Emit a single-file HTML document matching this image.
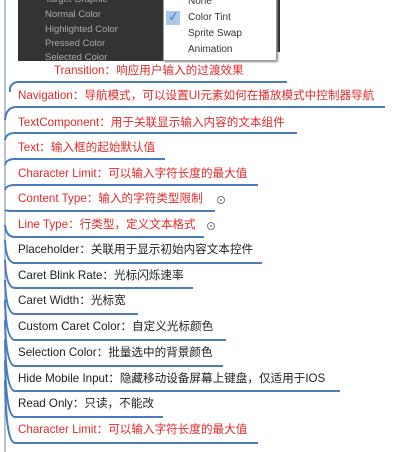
<!DOCTYPE html>
<html><head><meta charset="utf-8"><style>
body{margin:0;width:404px;height:452px;background:#fff;position:relative;overflow:hidden;font-family:"Liberation Sans","Noto Sans CJK SC",sans-serif;}
.t{position:absolute;left:18px;font-size:11.6px;line-height:16px;white-space:nowrap;color:#222;}
.r{color:#e02a2a;}
.panel{position:absolute;left:18px;top:0;width:146px;height:61px;background:#333;}
.panel div{position:absolute;left:27px;font-size:9.5px;color:#aaa;}
.dd{position:absolute;left:163px;top:-2px;width:112px;height:61px;background:#fff;border:1px solid #999;box-shadow:1px 1px 2px #888;}
.dd div{position:absolute;left:24px;font-size:10px;color:#333;}
.plus{position:absolute;width:6px;height:6px;border:1px solid #777;border-radius:50%;font-size:0;}
.plus::after{content:"";position:absolute;left:2px;top:2px;width:2px;height:2px;background:#777;border-radius:50%;}
</style></head><body>
<div class="panel">
<div style="top:-6px">Target Graphic</div>
<div style="top:9px">Normal Color</div>
<div style="top:24px">Highlighted Color</div>
<div style="top:38px">Pressed Color</div>
<div style="top:52px">Selected Color</div>
</div>
<div style="position:absolute;left:276px;top:0;width:4px;height:52px;background:#222"></div>
<div class="dd">
<div style="top:-3px">None</div>
<div style="left:2px;top:12px;width:14px;height:14px;background:#a9c9ef;color:#2a5ea8;text-align:center;line-height:14px;font-size:10px">✓</div>
<div style="top:13px">Color Tint</div>
<div style="top:29px">Sprite Swap</div>
<div style="top:45px">Animation</div>
</div>
<svg width="404" height="452" style="position:absolute;left:0;top:0" fill="none">
<path d="M5 0 V452" stroke="#8a9bb0" stroke-width="1.2"/>
<g stroke="#4a7bbf" stroke-width="2">
<path d="M10 92 Q9 83 18 82 H287"/>
<path d="M5 120 Q6 108 15 107 H385"/>
<path d="M5 140 Q6 133 15 133 H297"/>
<path d="M5 165 Q6 159 15 159 H165"/>
<path d="M5 190 Q6 185 15 185 H258"/>
<path d="M5 210 Q6 211 15 211 H215"/>
<path d="M5 225 Q6 237 15 237 H204"/>
<path d="M5 240 Q6 263 15 263 H262"/>
<path d="M5 260 Q6 288 15 288 H193"/>
<path d="M5 280 Q6 314 15 314 H138"/>
<path d="M5 300 Q6 340 15 340 H226"/>
<path d="M5 320 Q6 366 15 366 H223"/>
<path d="M5 340 Q6 391 15 391 H340"/>
<path d="M5 360 Q6 417 15 417 H163"/>
<path d="M5 380 Q6 443 15 443 H258"/>
</g>
</svg>
<div class="t r" style="left:54px;top:63px">Transition：响应用户输入的过渡效果</div>
<div class="t r" style="top:88px">Navigation：导航模式，可以设置UI元素如何在播放模式中控制器导航</div>
<div class="t r" style="top:115px">TextComponent：用于关联显示输入内容的文本组件</div>
<div class="t r" style="top:140px">Text：输入框的起始默认值</div>
<div class="t r" style="top:166px">Character Limit：可以输入字符长度的最大值</div>
<div class="t r" style="top:191px">Content Type：输入的字符类型限制</div>
<div class="plus" style="left:217px;top:196px"></div>
<div class="t r" style="top:217px">Line Type：行类型，定义文本格式</div>
<div class="plus" style="left:207px;top:222px"></div>
<div class="t" style="top:242px">Placeholder：关联用于显示初始内容文本控件</div>
<div class="t" style="top:268px">Caret Blink Rate：光标闪烁速率</div>
<div class="t" style="top:293px">Caret Width：光标宽</div>
<div class="t" style="top:319px">Custom Caret Color：自定义光标颜色</div>
<div class="t" style="top:345px">Selection Color：批量选中的背景颜色</div>
<div class="t" style="top:371px">Hide Mobile Input：隐藏移动设备屏幕上键盘，仅适用于IOS</div>
<div class="t" style="top:396px">Read Only：只读，不能改</div>
<div class="t r" style="top:422px">Character Limit：可以输入字符长度的最大值</div>
</body></html>
